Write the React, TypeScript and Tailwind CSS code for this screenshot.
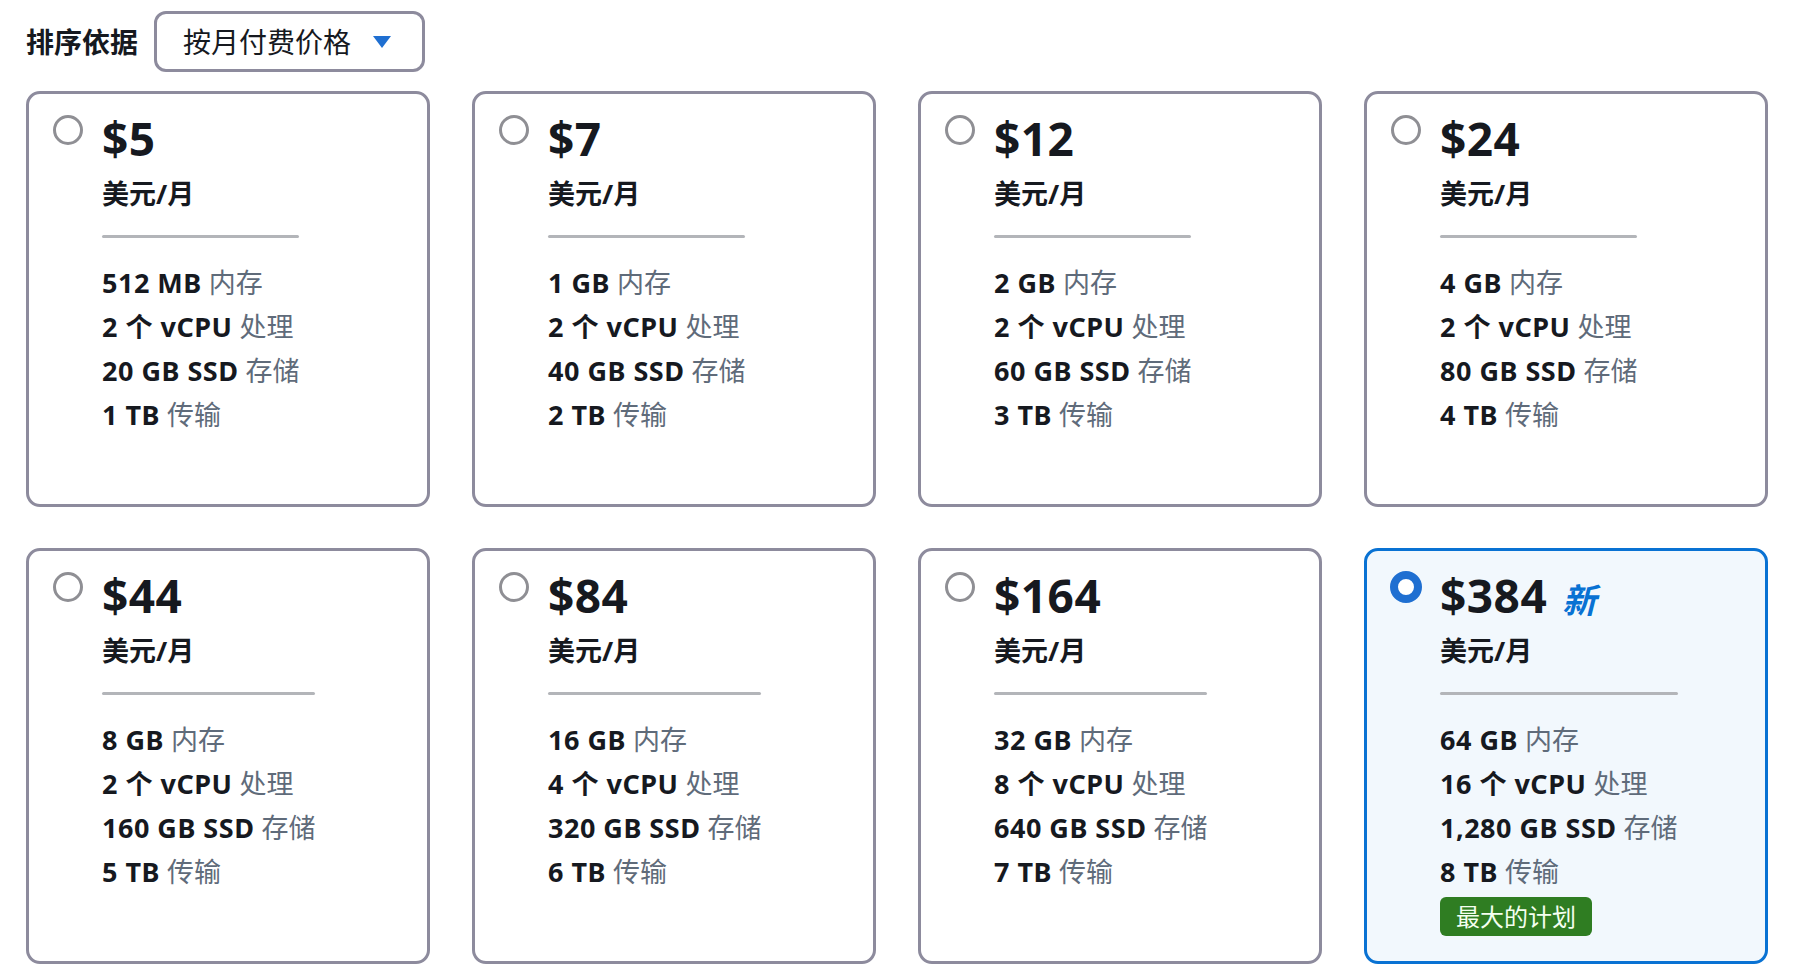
import React from 'react';

type Plan = {
  price: number;
  memory: string;
  vcpu: number;
  ssd: string;
  transfer: number;
  isNew?: boolean;
  largest?: boolean;
};

const plans: Plan[] = [
  { price: 5, memory: '512 MB', vcpu: 2, ssd: '20', transfer: 1 },
  { price: 7, memory: '1 GB', vcpu: 2, ssd: '40', transfer: 2 },
  { price: 12, memory: '2 GB', vcpu: 2, ssd: '60', transfer: 3 },
  { price: 24, memory: '4 GB', vcpu: 2, ssd: '80', transfer: 4 },
  { price: 44, memory: '8 GB', vcpu: 2, ssd: '160', transfer: 5 },
  { price: 84, memory: '16 GB', vcpu: 4, ssd: '320', transfer: 6 },
  { price: 164, memory: '32 GB', vcpu: 8, ssd: '640', transfer: 7 },
  { price: 384, memory: '64 GB', vcpu: 16, ssd: '1,280', transfer: 8, isNew: true, largest: true },
];

const font = { fontFamily: '"Noto Sans", "Noto Sans CJK SC", sans-serif' };

function SpecLine({ value, label }: { value: string; label: string }) {
  return (
    <div className="text-[27px] leading-[44px] whitespace-nowrap">
      <span className="font-bold tracking-[0.5px] text-[#16191f]">{value}</span>{' '}
      <span className="text-[#5f6b7a]">{label}</span>
    </div>
  );
}

function PlanCard({ plan, selected }: { plan: Plan; selected: boolean }) {
  return (
    <div
      className={
        selected
          ? 'flex h-[416px] rounded-[14px] border-[3px] border-[#0972d3] bg-[#f2f8fd] pl-[24px] pt-[16px]'
          : 'flex h-[416px] rounded-[14px] border-[3px] border-[#8d8b9d] bg-white pl-[24px] pt-[16px]'
      }
    >
      {selected ? (
        <div className="mt-[4px] ml-[-1px] h-[32px] w-[32px] shrink-0 rounded-full border-[8px] border-[#1f6fd1] bg-white" />
      ) : (
        <div className="mt-[5px] h-[30px] w-[30px] shrink-0 rounded-full border-[3px] border-[#8f8f94] bg-white" />
      )}
      <div className={selected ? 'ml-[18px] flex w-fit flex-col' : 'ml-[19px] flex w-fit flex-col'}>
        <div className="whitespace-nowrap text-[46px] leading-[56px] font-bold tracking-[0.5px] text-[#16191f]">
          ${plan.price}
          {plan.isNew && (
            <span className="ml-[15px] text-[34px] leading-none font-bold italic text-[#0972d3]">新</span>
          )}
        </div>
        <div className="mt-[10px] text-[27px] leading-[36px] font-bold text-[#16191f]">美元/月</div>
        <div className="mt-[23px] h-[3px] w-full rounded-full bg-[#b3b5b9]" />
        <div className="mt-[23px] flex flex-col">
          <SpecLine value={plan.memory} label="内存" />
          <SpecLine value={`${plan.vcpu} 个 vCPU`} label="处理" />
          <SpecLine value={`${plan.ssd} GB SSD`} label="存储" />
          <SpecLine value={`${plan.transfer} TB`} label="传输" />
        </div>
        {plan.largest && (
          <span className="mt-[3px] flex h-[39px] w-fit items-center rounded-[6px] bg-[#2f7d22] px-[16px] text-[24px] text-[#f4fff0]">
            最大的计划
          </span>
        )}
      </div>
    </div>
  );
}

export default function App() {
  return (
    <div className="min-h-screen bg-white px-[26px] pt-[11px]" style={font}>
      <div className="flex items-center gap-[16px]">
        <span className="text-[28px] font-bold text-[#16191f]">排序依据</span>
        <button className="flex h-[61px] w-[271px] items-center justify-between rounded-[12px] border-[3px] border-[#8d8b9d] bg-white pl-[26px] pr-[31px]">
          <span className="text-[28px] text-[#16191f]">按月付费价格</span>
          <svg width="18" height="12" viewBox="0 0 18 12">
            <path d="M0 0 H18 L9 12 Z" fill="#1f6fd1" />
          </svg>
        </button>
      </div>
      <div className="mt-[19px] grid grid-cols-[repeat(4,404px)] gap-x-[42px] gap-y-[41px]">
        {plans.map((p) => (
          <PlanCard key={p.price} plan={p} selected={p.price === 384} />
        ))}
      </div>
    </div>
  );
}
